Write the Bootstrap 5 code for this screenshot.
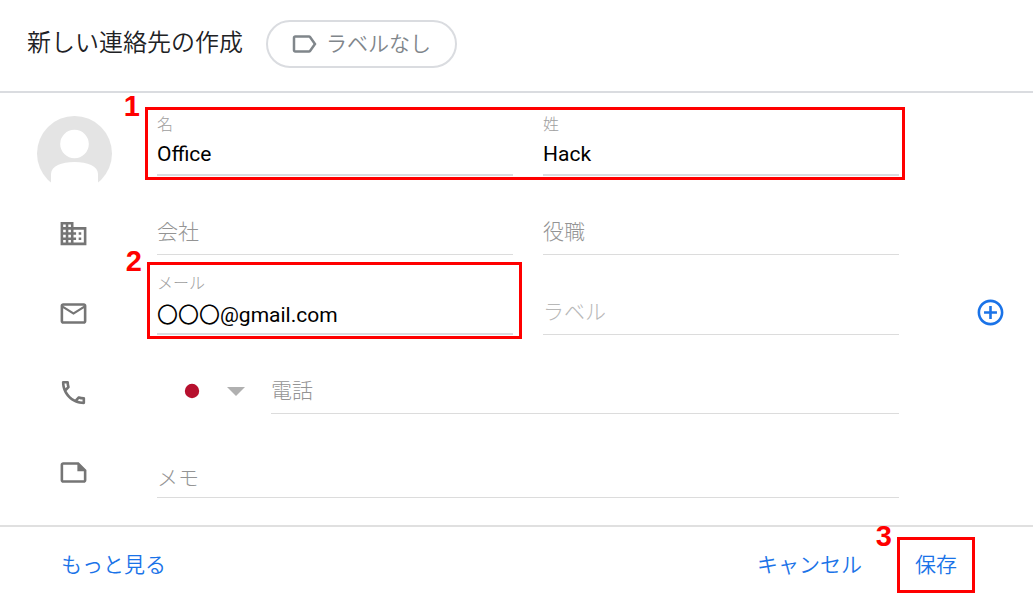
<!DOCTYPE html>
<html lang="ja">
<head>
<meta charset="utf-8">
<meta name="viewport" content="width=device-width, initial-scale=1">
<title>新しい連絡先の作成</title>
<link href="https://cdn.jsdelivr.net/npm/bootstrap@5.3.0/dist/css/bootstrap.min.css" rel="stylesheet">
<style>
  body { font-family: Roboto, "Noto Sans CJK JP", sans-serif; font-size: 21px; line-height: 32px; font-weight: 300; color: #202124; background: #fff; }
  .app-head { padding: 20px 27px; gap: 23px; height: 93px; border-bottom: 2px solid #dadce0; }
  .app-title { font-size: 24px; line-height: 36px; font-weight: 350; margin: 5px 0 0; }
  .chip { height: 48px; padding: 0 24px 0 21px; gap: 7px; border: 2px solid #dadce0; border-radius: 24px; background: #fff; color: #80868b; font-weight: 350; }
  .form-line { display: grid; grid-template-columns: 157px 1fr 134px; align-items: end; min-height: 80px; }
  .line-name { min-height: 99px; align-items: start; }
  .line-name .avatar { margin: 23px 0 0 37px; }
  .line-name .pair { padding-top: 20px; }
  .line-work { min-height: 63px; }
  .line-phone { min-height: 79px; }
  .line-note { min-height: 84px; margin-bottom: 27px; }
  .line-icon { margin: 0 0 6px 58px; color: #757575; }
  .line-note .line-icon { margin-bottom: 10px; }
  .pair { display: grid; grid-template-columns: 1fr 1fr; column-gap: 30px; align-items: end; }
  .field { position: relative; }
  .field label { display: block; font-size: 16px; line-height: 24px; color: #9e9e9e; margin-bottom: 0; }
  .line-input { display: block; width: 100%; height: 41px; padding: 0 0 5px; border: 0; border-bottom: 1px solid #dcdcdc; border-radius: 0; background: transparent; font-size: 21px; line-height: 32px; font-weight: 300; color: #000; resize: none; overflow: hidden; box-shadow: none; }
  .line-input::placeholder { color: #949494; opacity: 1; }
  .line-input:focus { outline: 0; border-color: #1a73e8; }
  .line-input.filled { height: 39px; padding-bottom: 3px; border-bottom: 2px solid #dadce0; font-weight: 400; }
  .line-input.faint { border-color: #dcdcdc; }
  .line-input.faint::placeholder { color: #b8b8b8; }
  .line-input.memo { height: 36px; padding-bottom: 3px; }
  .country { width: 84px; height: 41px; margin-left: 26px; padding: 0; border: 0; background-color: transparent; background-repeat: no-repeat; background-size: 64px 16px; background-position: 0 10px;
    background-image: url("data:image/svg+xml,%3csvg xmlns='http://www.w3.org/2000/svg' viewBox='0 0 64 16'%3e%3ccircle cx='9' cy='8' r='7.2' fill='%23b7102e'/%3e%3cpath d='M44 4h18l-9 9z' fill='%23b0b0b0'/%3e%3c/svg%3e"); }
  .btn-add { margin: 0 0 7px 76px; }
  .text-act { color: #1a73e8; font-size: 21px; line-height: 32px; font-weight: 350; border: 0; background: none; padding: 0; }
  .app-foot { border-top: 2px solid #e0e0e0; padding: 10px 58px 7px 61px; }
  .foot-acts { gap: 35px; }
  .save-act { padding: 12px 18px; }
  .step-box { position: absolute; border: 3px solid #f00; pointer-events: none; }
  .step-name { inset: 14px -6px -4px -12px; }
  .step-mail { inset: -10px -9px -4px -10px; }
  .step-save { inset: 0; }
  .step-num { position: absolute; right: 100%; top: -20px; margin-right: 8px; font: bold 29px/32px "Liberation Sans", Arial, sans-serif; color: #f00; }
</style>
</head>
<body>
<form class="m-0">
  <header class="app-head d-flex align-items-start">
    <h1 class="app-title">新しい連絡先の作成</h1>
    <button type="button" class="chip d-flex align-items-center">
      <svg width="30" height="30" viewBox="0 0 24 24" fill="currentColor" aria-hidden="true"><path d="M17.63 5.84C17.27 5.33 16.67 5 16 5L5 5.01C3.9 5.01 3 5.9 3 7v10c0 1.1.9 1.99 2 1.99L16 19c.67 0 1.27-.33 1.63-.84L22 12l-4.37-6.16zM16 17H5V7h11l3.55 5L16 17z"/></svg>
      <span>ラベルなし</span>
    </button>
  </header>

  <main>
    <div class="form-line line-name">
      <svg class="avatar" width="75" height="75" viewBox="0 0 75 75" aria-hidden="true"><circle cx="37.5" cy="37.5" r="37.5" fill="#e4e4e4"/><circle cx="37.5" cy="28" r="14.3" fill="#fff"/><path d="M14 75V58c0-8 10.500-12 23.500-12S61 50 61 58v17z" fill="#fff"/></svg>
      <div class="pair position-relative">
        <div class="field"><label for="first">名</label><input id="first" class="line-input filled" type="text" value="Office"></div>
        <div class="field"><label for="last">姓</label><input id="last" class="line-input filled" type="text" value="Hack"></div>
        <div class="step-box step-name"><span class="step-num">1</span></div>
      </div>
    </div>

    <div class="form-line line-work">
      <svg class="line-icon" width="31" height="31" viewBox="0 0 24 24" fill="currentColor" aria-hidden="true"><path d="M12 7V3H2v18h20V7H12zM6 19H4v-2h2v2zm0-4H4v-2h2v2zm0-4H4V9h2v2zm0-4H4V5h2v2zm4 12H8v-2h2v2zm0-4H8v-2h2v2zm0-4H8V9h2v2zm0-4H8V5h2v2zm10 12h-8v-2h2v-2h-2v-2h2v-2h-2V9h8v10zm-2-8h-2v2h2v-2zm0 4h-2v2h2v-2z"/></svg>
      <div class="pair">
        <input class="line-input" type="text" placeholder="会社" aria-label="会社">
        <input class="line-input" type="text" placeholder="役職" aria-label="役職">
      </div>
    </div>

    <div class="form-line">
      <svg class="line-icon" width="31" height="31" viewBox="0 0 24 24" fill="currentColor" aria-hidden="true"><path d="M22 6c0-1.100-.9-2-2-2H4c-1.100 0-2 .9-2 2v12c0 1.100.9 2 2 2h16c1.100 0 2-.9 2-2V6zm-2 0l-8 5-8-5h16zm0 12H4V8l8 5 8-5v10z"/></svg>
      <div class="pair">
        <div class="field">
          <label for="mail">メール</label><input id="mail" class="line-input filled" type="text" value="〇〇〇@gmail.com">
          <div class="step-box step-mail"><span class="step-num">2</span></div>
        </div>
        <input class="line-input faint" type="text" placeholder="ラベル" aria-label="ラベル">
      </div>
      <button type="button" class="text-act btn-add d-flex" aria-label="追加"><svg width="31" height="31" viewBox="0 0 24 24" fill="currentColor" aria-hidden="true"><path d="M13 7h-2v4H7v2h4v4h2v-4h4v-2h-4V7zm-1-5C6.480 2 2 6.480 2 12s4.480 10 10 10 10-4.480 10-10S17.520 2 12 2zm0 18c-4.410 0-8-3.590-8-8s3.590-8 8-8 8 3.590 8 8-3.590 8-8 8z"/></svg></button>
    </div>

    <div class="form-line line-phone">
      <svg class="line-icon" width="31" height="31" viewBox="0 0 24 24" fill="currentColor" aria-hidden="true"><path d="M6.540 5c.06.890.210 1.760.450 2.590l-1.200 1.200c-.410-1.200-.670-2.470-.760-3.790h1.510m9.860 12.020c.850.240 1.720.390 2.600.450v1.490c-1.320-.09-2.590-.350-3.800-.750l1.200-1.190M7.500 3H4c-.550 0-1 .450-1 1 0 9.390 7.610 17 17 17 .550 0 1-.450 1-1v-3.490c0-.550-.450-1-1-1-1.240 0-2.450-.2-3.570-.570-.1-.04-.210-.05-.310-.05-.260 0-.510.1-.710.290l-2.200 2.200c-2.830-1.450-5.150-3.760-6.590-6.590l2.200-2.200c.280-.280.360-.670.250-1.020C8.700 6.450 8.500 5.250 8.500 4c0-.550-.450-1-1-1z"/></svg>
      <div class="d-flex gap-1">
        <select class="form-select country flex-shrink-0" aria-label="国"><option value="JP" aria-label="日本"></option></select>
        <input class="line-input flex-grow-1" type="tel" placeholder="電話" aria-label="電話">
      </div>
    </div>

    <div class="form-line line-note">
      <svg class="line-icon" width="31" height="31" viewBox="0 0 24 24" fill="currentColor" aria-hidden="true"><path d="M16 4H4c-1.100 0-2 .9-2 2v12c0 1.100.9 2 2 2h16c1.100 0 2-.9 2-2v-8l-6-6zM4 18V6h11v5h5v7z"/></svg>
      <textarea class="line-input memo" rows="1" placeholder="メモ" aria-label="メモ"></textarea>
    </div>
  </main>

  <footer class="app-foot d-flex align-items-center justify-content-between">
    <button type="button" class="text-act">もっと見る</button>
    <div class="foot-acts d-flex align-items-center">
      <button type="button" class="text-act">キャンセル</button>
      <div class="position-relative">
        <button type="submit" class="text-act save-act d-block">保存</button>
        <div class="step-box step-save"><span class="step-num">3</span></div>
      </div>
    </div>
  </footer>
</form>
<script src="https://cdn.jsdelivr.net/npm/bootstrap@5.3.0/dist/js/bootstrap.bundle.min.js"></script>
</body>
</html>
